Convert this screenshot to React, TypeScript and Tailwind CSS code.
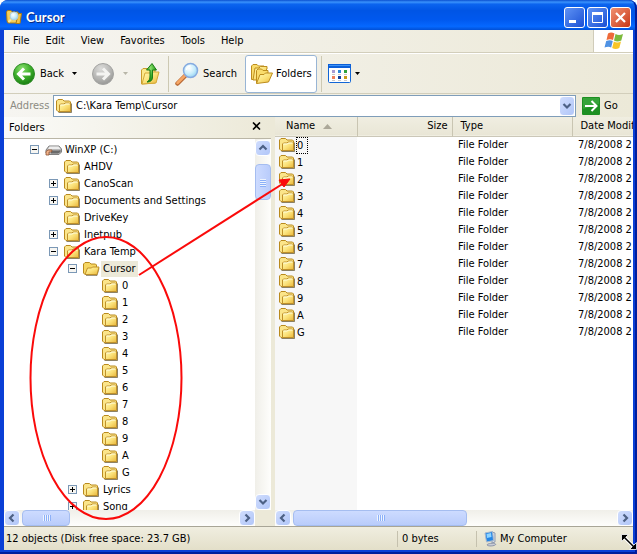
import React from "react";
import clsx from "clsx";

interface TreeNode {
    name: string;
    level: number;
    state?: "open" | "closed";
    selected?: boolean;
    drive?: boolean;
}

const folderNames = ["0", "1", "2", "3", "4", "5", "6", "7", "8", "9", "A", "G"];

const tree: TreeNode[] = [
    { name: "WinXP (C:)", level: 0, state: "open", drive: true },
    { name: "AHDV", level: 1 },
    { name: "CanoScan", level: 1, state: "closed" },
    { name: "Documents and Settings", level: 1, state: "closed" },
    { name: "DriveKey", level: 1 },
    { name: "Inetpub", level: 1, state: "closed" },
    { name: "Kara Temp", level: 1, state: "open" },
    { name: "Cursor", level: 2, state: "open", selected: true },
    ...folderNames.map((name) => ({ name, level: 3 })),
    { name: "Lyrics", level: 2, state: "closed" },
    { name: "Song", level: 2, state: "closed" },
];

const indents = ["pl-[26px]", "pl-[45px]", "pl-16", "pl-[83px]"];

const menus = ["File", "Edit", "View", "Favorites", "Tools", "Help"];

const Gradients = () => (
    <svg width="0" height="0" className="absolute" aria-hidden="true">
        <defs>
            <linearGradient id="folder" x1="0" y1="0" x2="1" y2="1">
                <stop offset="0" stopColor="#fffbb8" />
                <stop offset="0.5" stopColor="#fbe27a" />
                <stop offset="1" stopColor="#e9b63a" />
            </linearGradient>
            <radialGradient id="green" cx="0.4" cy="0.25" r="0.8">
                <stop offset="0" stopColor="#8be070" />
                <stop offset="0.5" stopColor="#3fb02c" />
                <stop offset="1" stopColor="#167a10" />
            </radialGradient>
            <radialGradient id="gray" cx="0.4" cy="0.25" r="0.8">
                <stop offset="0" stopColor="#dcdcda" />
                <stop offset="0.6" stopColor="#b5b5b3" />
                <stop offset="1" stopColor="#949492" />
            </radialGradient>
            <radialGradient id="lens" cx="0.4" cy="0.35" r="0.7">
                <stop offset="0" stopColor="#ffffff" />
                <stop offset="0.6" stopColor="#c5ecfb" />
                <stop offset="1" stopColor="#8fcdf0" />
            </radialGradient>
        </defs>
    </svg>
);

const FolderIcon = () => (
    <svg width="17" height="16" viewBox="0 0 17 16" className="shrink-0" aria-hidden="true">
        <path d="M2.500 14.500h13v-9" fill="none" stroke="#5c4d24" strokeOpacity="0.7" />
        <path d="M0.500 12V3L2 1.500h4.500L8 3h5.500l1 1v9.500H2Z" fill="#fbe58a" stroke="#b98a1e" />
        <path d="M3.500 13.500V7l1-1H8l1-1h4.500l1 1v7.500Z" fill="url(#folder)" stroke="#c0912a" />
        <path d="M4.500 7h4l1-1h4" fill="none" stroke="#fffde0" />
    </svg>
);

const OpenFolderIcon = () => (
    <svg width="17" height="16" viewBox="0 0 17 16" className="shrink-0" aria-hidden="true">
        <path d="M3 14.500h11l2-7" fill="none" stroke="#5c4d24" strokeOpacity="0.6" />
        <path d="M0.500 12V3L2 1.500h4.500L8 3h4.500l1 1v8L12 13.500H2Z" fill="#f6d764" stroke="#b98a1e" />
        <path d="M2 13.500L4.500 7h4l1-1h6.500l-2 7.500Z" fill="url(#folder)" stroke="#c0912a" />
    </svg>
);

const DriveIcon = () => (
    <svg width="17" height="16" viewBox="0 0 17 16" className="shrink-0" aria-hidden="true">
        <path d="M1 8l3-4h10l2.500 3v3L14 12.500H3L1 11Z" fill="#b9b9b9" stroke="#808080" />
        <path d="M4.500 4.500h9l2 2.500H3Z" fill="#ededed" />
        <path d="M6 8.500h8l1.500-.5v2L13 11.500H6Z" fill="#6a6a6a" />
        <path d="M1 13V9.500L3 8h4L6.500 10H4v3Z" fill="#f0b48c" stroke="#8d5030" strokeWidth="0.800" />
    </svg>
);

const TitleIcon = () => (
    <svg width="17" height="16" viewBox="0 0 17 16" className="shrink-0" aria-hidden="true">
        <path d="M1 12L0.500 3l1-1.500H5L6.500 3H12l.5 3-1 8H2Z" fill="#f5cf58" stroke="#a87b18" />
        <path d="M10 14.500L12 4.500h3.500L14 14.500Z" fill="#f3c244" stroke="#a87b18" />
        <circle cx="8" cy="7" r="4" fill="url(#lens)" stroke="#b4d0e0" />
        <path d="M5 10.500L2.500 13" stroke="#fbe9a0" strokeWidth="2" />
    </svg>
);

const FoldersIcon = () => (
    <svg width="24" height="22" viewBox="0 0 24 22" aria-hidden="true">
        <path d="M1.500 16.500V3L3 1.500h4L8.500 3H14v2L5 16.500Z" fill="#f9dc6c" stroke="#bd8d1d" />
        <path d="M3 17L5 5h4l1.500-1.500H17V6L7 17Z" fill="url(#folder)" stroke="#bd8d1d" />
        <path d="M6.500 20V7.500L8 6h3.500L13 7.500h5V10L8 20Z" fill="#f9dc6c" stroke="#bd8d1d" />
        <path d="M6.500 20.500l3.500-9h4L15.500 10h7l-4 9Z" fill="url(#folder)" stroke="#bd8d1d" />
    </svg>
);

const UpIcon = () => (
    <svg width="20" height="24" viewBox="0 0 20 24" aria-hidden="true">
        <path d="M1.500 22V8L3 6.500h5L9 8h6v13Z" fill="#fbe98c" stroke="#c99c2c" />
        <path d="M2 22l3-11h5l1-1h8l-3 11Z" fill="url(#folder)" stroke="#d5a936" />
        <path d="M7 20c4 0 5.500-2 5.500-5V8H16.500L12 1.500 6.500 8H10v6c0 3-1 5-3 6Z" fill="url(#green)" stroke="#1c7d18" />
    </svg>
);

const RoundArrow = ({ back }: { back?: boolean }) => (
    <svg width="24" height="24" viewBox="0 0 24 24" aria-hidden="true">
        <circle cx="12" cy="12" r="10.500" fill={back ? "url(#green)" : "url(#gray)"} stroke={back ? "#2f8c27" : "#a3a3a1"} />
        <path
            d={back ? "M18.500 12H7M12 6.500L6.500 12l5.500 5.500" : "M5.500 12H17M12 6.500l5.500 5.500-5.500 5.500"}
            fill="none"
            stroke={back ? "#ffffff" : "#f4f4f2"}
            strokeWidth="3"
        />
    </svg>
);

const SearchIcon = () => (
    <svg width="24" height="24" viewBox="0 0 24 24" aria-hidden="true">
        <path d="M2.500 21.500l8-8" stroke="#b86a35" strokeWidth="4.500" strokeLinecap="round" />
        <path d="M2.500 21l7.500-7.500" stroke="#f7a765" strokeWidth="2.500" strokeLinecap="round" />
        <circle cx="15.500" cy="8.500" r="7" fill="url(#lens)" stroke="#86abe0" strokeWidth="1.500" />
        <path d="M11.500 8a4 4 0 014-4" fill="none" stroke="#ffffff" strokeWidth="1.500" />
    </svg>
);

const ViewsIcon = () => (
    <svg width="23" height="19" viewBox="0 0 23 19" aria-hidden="true">
        <rect x="0.500" y="0.500" width="22" height="18" rx="1" fill="#ffffff" stroke="#1266d6" />
        <path d="M0 0h23v4H0Z" fill="#0c5fd8" />
        <path d="M1 1h21v1H1Z" fill="#3f93f5" />
        <path d="M4 6h3v3H4Z" fill="#a99bd3" />
        <path d="M10 6h3v3h-3Z" fill="#3087d8" />
        <path d="M16 6h3v3h-3Z" fill="#2fa33d" />
        <path d="M4 12h3v3H4Z" fill="#f0805a" />
        <path d="M10 12h3v3h-3Z" fill="#153f9a" />
        <path d="M16 12h3v3h-3Z" fill="#c79a16" />
        <path d="M4 10.500h3M10 10.500h3M16 10.500h3M4 16.500h3M10 16.500h3M16 16.500h3" stroke="#c9c9c9" />
    </svg>
);

const Caret = ({ muted }: { muted?: boolean }) => (
    <svg width="5" height="3" viewBox="0 0 5 3" aria-hidden="true">
        <path d="M0 0h5L2.500 3Z" fill={muted ? "#b8b6a8" : "#000000"} />
    </svg>
);

const WindowsLogo = () => (
    <svg width="20" height="18" viewBox="0 0 20 18" aria-hidden="true">
        <path d="M4 1.500c2.500-1.500 4.500-1 6.500 0L9 8C7 7 5 7 2.500 8Z" fill="#ee6a3a" />
        <path d="M11.500 2c2.500 1.200 4.500 1.200 7.500 0l-1.700 6.500c-2.800 1.200-5 1.200-7.300 0Z" fill="#7cba3c" />
        <path d="M2.200 9C5 8 6.800 8 8.800 9l-1.600 6.500c-2-1.200-4-1-6.700 0Z" fill="#4f92e4" />
        <path d="M9.800 9.500c2.400 1.200 4.500 1.200 7.200 0L15.300 16c-2.600 1.200-4.800 1.200-7.100 0Z" fill="#f8c526" />
    </svg>
);

const ComputerIcon = () => (
    <svg width="14" height="16" viewBox="0 0 14 16" aria-hidden="true">
        <path d="M8 1l3 1v9l-3 1Z" fill="#d7dbe4" stroke="#8f9bb0" />
        <path d="M1 2l7.500-1.500 1 9-7 1.500Z" fill="#2385e6" stroke="#a9b8cc" />
        <path d="M2.500 3L7 2l.5 4-4.500 1Z" fill="#8fd4ff" />
        <path d="M3 14c0-1.500 7-2.500 8.500-1S5 16 3 14Z" fill="#c9cdd8" stroke="#8c94a8" />
    </svg>
);

const chevrons = {
    up: "M1.500 6.500L5 3l3.500 3.500",
    down: "M1.500 3L5 6.500 8.500 3",
    left: "M6.500 1.500L3 5l3.500 3.500",
    right: "M3.500 1.500L7 5 3.500 8.500",
};

const ScrollButton = ({ direction, label, className = "h-4" }: { direction: keyof typeof chevrons; label: string; className?: string }) => (
    <button
        aria-label={label}
        className={clsx(
            "flex w-4 shrink-0 items-center justify-center rounded-sm border border-white bg-linear-to-br from-[#d0ddfd] to-[#b1c6f8]",
            className
        )}
    >
        <svg width="10" height="10" viewBox="0 0 10 10" aria-hidden="true">
            <path d={chevrons[direction]} fill="none" stroke="#4d6185" strokeWidth="2.200" />
        </svg>
    </button>
);

const HorizontalScroll = ({ thumb }: { thumb: string }) => (
    <div className="flex h-4 shrink-0 bg-linear-to-b from-[#f0efe9] to-[#fefefc]">
        <ScrollButton direction="left" label="Scroll left" />
        <div className="flex grow pl-0.5">
            <div
                className={clsx(
                    "flex items-center justify-center gap-px rounded-sm border border-[#a5bdf0] bg-linear-to-b from-[#cddbff] to-[#b9ccfb]",
                    thumb
                )}
            >
                {[0, 1, 2, 3].map((line) => (
                    <span key={line} className="h-1.5 w-px bg-[#eef4fe] shadow-[1px_0_#8cb0f8]" />
                ))}
            </div>
        </div>
        <ScrollButton direction="right" label="Scroll right" />
    </div>
);

const Expander = ({ state }: { state?: "open" | "closed" }) => {
    if (!state) return <span className="w-[9px] shrink-0" />;
    return (
        <button aria-label={state === "open" ? "Collapse" : "Expand"} className="shrink-0">
            <svg width="9" height="9" viewBox="0 0 9 9" aria-hidden="true" shapeRendering="crispEdges">
                <rect x="0.500" y="0.500" width="8" height="8" fill="#f7f6f2" stroke="#7b98b6" />
                <path d={state === "open" ? "M2 4.500h5" : "M2 4.500h5M4.500 2v5"} stroke="#000000" />
            </svg>
        </button>
    );
};

const TitleBar = () => (
    <header className="flex h-[30px] shrink-0 items-center bg-[linear-gradient(#0a50d0_0%,#3a92fc_7%,#0b64ef_14%,#0055e5_35%,#0058ee_65%,#0568ff_88%,#0150d6_100%)] px-1.5 pt-1">
        <TitleIcon />
        <h1 className="grow pl-[3px] font-['Lato',sans-serif] text-[13px] font-bold text-white [text-shadow:1px_1px_#0a2a80]">Cursor</h1>
        <div className="flex gap-0.5">
            <button aria-label="Minimize" className="size-[21px] rounded-[3px] border border-white bg-linear-to-br from-[#5f92f4] to-[#1c4fd4]">
                <svg width="19" height="19" viewBox="0 0 19 19" aria-hidden="true">
                    <path d="M4 12h7v3H4Z" fill="#ffffff" />
                </svg>
            </button>
            <button aria-label="Maximize" className="size-[21px] rounded-[3px] border border-white bg-linear-to-br from-[#5f92f4] to-[#1c4fd4]">
                <svg width="19" height="19" viewBox="0 0 19 19" aria-hidden="true">
                    <path d="M4.500 5v9.500h10V5" fill="none" stroke="#ffffff" />
                    <path d="M4 4h11v3H4Z" fill="#ffffff" />
                </svg>
            </button>
            <button aria-label="Close" className="size-[21px] rounded-[3px] border border-white bg-linear-to-br from-[#f0906f] to-[#c8330f]">
                <svg width="19" height="19" viewBox="0 0 19 19" aria-hidden="true">
                    <path d="M5 5l9 9M14 5l-9 9" stroke="#ffffff" strokeWidth="2.200" />
                </svg>
            </button>
        </div>
    </header>
);

const MenuBar = () => (
    <nav className="flex h-[23px] shrink-0 border-b border-[#d2cebb]">
        <div className="flex grow items-center gap-4 pl-[9px]">
            {menus.map((menu) => (
                <button key={menu}>{menu}</button>
            ))}
        </div>
        <div className="flex w-10 items-center justify-center border-l border-[#d0ccba] bg-white">
            <WindowsLogo />
        </div>
    </nav>
);

const Toolbar = () => (
    <div className="flex h-10 shrink-0 items-center border-t border-white pl-2">
        <button className="flex items-center gap-1">
            <RoundArrow back />
            Back
        </button>
        <button aria-label="Back history" className="px-2">
            <Caret />
        </button>
        <button aria-label="Forward" className="pl-1.5">
            <RoundArrow />
        </button>
        <button aria-label="Forward history" className="px-2">
            <Caret muted />
        </button>
        <button aria-label="Up" className="px-1">
            <UpIcon />
        </button>
        <span className="mx-1 h-9 w-px bg-[#cdc9b3]" />
        <button className="flex items-center gap-1 pl-0.5">
            <SearchIcon />
            Search
        </button>
        <button className="ml-2 flex h-[38px] items-center gap-0.5 rounded-[3px] border border-[#98b5d5] bg-white px-1">
            <FoldersIcon />
            Folders
        </button>
        <span className="mx-1 h-9 w-px bg-[#cdc9b3]" />
        <button aria-label="Views" className="flex items-center gap-1 pl-0.5">
            <ViewsIcon />
            <Caret />
        </button>
    </div>
);

const AddressBar = () => (
    <div className="flex h-6 shrink-0 items-center border-t border-[#d2cebb] pl-1.5">
        <label htmlFor="address" className="w-[43px] text-[#8c8b82]">
            Address
        </label>
        <div className="flex h-[22px] grow items-center border border-[#7f9db9] bg-white pl-0.5">
            <FolderIcon />
            <input id="address" defaultValue="C:\Kara Temp\Cursor" className="min-w-0 grow pl-[3px] outline-none" />
            <ScrollButton direction="down" label="Show addresses" className="h-5" />
        </div>
        <button className="flex w-[57px] items-center gap-1 pl-1.5">
            <svg width="18" height="18" viewBox="0 0 18 18" aria-hidden="true">
                <rect width="18" height="18" rx="1" fill="#1d8f22" />
                <path d="M1 1h16v6L1 12Z" fill="#46b14a" fillOpacity="0.6" />
                <path d="M3 9h11M9.500 4l5 5-5 5" fill="none" stroke="#ffffff" strokeWidth="2" />
            </svg>
            Go
        </button>
    </div>
);

const FolderTree = () => (
    <aside className="flex w-[267px] shrink-0 flex-col">
        <div className="flex h-[22px] shrink-0 items-center justify-between border-b border-[#bab6a6] bg-linear-to-r from-[#fbfbf9] to-[#ece9d8] pr-2.5 pl-[5px]">
            <h2>Folders</h2>
            <button aria-label="Close folders" className="pb-1">
                <svg width="9" height="8" viewBox="0 0 9 8" aria-hidden="true">
                    <path d="M1 0.500l7 7M8 0.500l-7 7" stroke="#000000" strokeWidth="1.600" />
                </svg>
            </button>
        </div>
        <div className="flex min-h-0 grow">
            <ul className="grow overflow-hidden bg-white pt-0.5">
                {tree.map((node) => (
                    <li key={node.name} className={clsx("flex h-[17px] items-center", indents[node.level])}>
                        <Expander state={node.state} />
                        <span className="pr-px pl-1.5">{node.drive ? <DriveIcon /> : node.selected ? <OpenFolderIcon /> : <FolderIcon />}</span>
                        <span className={clsx("px-0.5 leading-4", node.selected && "bg-[#ece9d8]")}>{node.name}</span>
                    </li>
                ))}
            </ul>
            <div className="flex w-4 shrink-0 flex-col bg-linear-to-r from-[#f0efe9] to-[#fefefc] pt-px">
                <ScrollButton direction="up" label="Scroll up" />
                <div className="flex grow flex-col pt-2">
                    <div className="flex h-9 flex-col items-center justify-center gap-px rounded-sm border border-[#a5bdf0] bg-linear-to-r from-[#cddbff] to-[#b9ccfb]">
                        {[0, 1, 2, 3].map((line) => (
                            <span key={line} className="h-px w-1.5 bg-[#eef4fe] shadow-[0_1px_#8cb0f8]" />
                        ))}
                    </div>
                </div>
                <ScrollButton direction="down" label="Scroll down" />
            </div>
        </div>
        <div className="pr-4">
            <HorizontalScroll thumb="w-12" />
        </div>
    </aside>
);

const FileList = () => (
    <main className="flex min-w-0 grow flex-col bg-[linear-gradient(to_right,#f7f7f7_82px,#ffffff_82px)]">
        <div className="min-h-0 grow overflow-hidden">
            <table className="w-[420px] table-fixed border-collapse text-left whitespace-nowrap">
                <thead>
                    <tr className="h-[19px] border-b border-[#cbc7b8] bg-linear-to-b from-[#f0eee1] to-[#e9e6d6]">
                        <th className="w-[82px] border-r border-[#c9c5b2] p-0 pl-[11px] font-normal">
                            <span className="flex items-center gap-2">
                                Name
                                <svg width="9" height="5" viewBox="0 0 9 5" aria-hidden="true">
                                    <path d="M0 5h9L4.500 0Z" fill="#aca899" />
                                </svg>
                            </span>
                        </th>
                        <th className="w-[95px] border-r border-[#c9c5b2] p-0 pr-1 text-right font-normal">Size</th>
                        <th className="w-[120px] border-r border-[#c9c5b2] p-0 pl-2 font-normal">Type</th>
                        <th className="p-0 pl-2 font-normal">Date Modified</th>
                    </tr>
                </thead>
                <tbody>
                    {folderNames.map((name, index) => (
                        <tr key={name} className="h-[17px]">
                            <td className="p-0 pl-1">
                                <span className="flex items-center">
                                    <FolderIcon />
                                    <span
                                        className={clsx(
                                            "border border-dotted pr-1 leading-[15px]",
                                            index === 0 ? "border-black" : "border-transparent"
                                        )}
                                    >
                                        {name}
                                    </span>
                                </span>
                            </td>
                            <td className="p-0" />
                            <td className="p-0 pl-1.5">File Folder</td>
                            <td className="p-0 pl-1.5">7/8/2008 2</td>
                        </tr>
                    ))}
                </tbody>
            </table>
        </div>
        <HorizontalScroll thumb="w-[174px]" />
    </main>
);

const StatusBar = () => (
    <footer className="flex h-6 shrink-0 items-center border-t border-[#a8a596] bg-linear-to-b from-[#f0eee0] to-[#e3dfc9]">
        <span className="grow pl-0.5">12 objects (Disk free space: 23.7 GB)</span>
        <span className="w-[79px] border-l border-[#c5c1ae] pl-1">0 bytes</span>
        <span className="flex w-[157px] items-center gap-0.5 border-l border-[#c5c1ae] pl-[7px]">
            <ComputerIcon />
            My Computer
        </span>
    </footer>
);

const Annotations = () => (
    <svg width="637" height="554" viewBox="0 0 637 554" className="pointer-events-none absolute top-0 left-0" aria-hidden="true">
        <ellipse cx="106" cy="378" rx="75.500" ry="141" fill="none" stroke="#fa0a0a" strokeWidth="2" />
        <path d="M139 275L284 183" stroke="#fa0a0a" strokeWidth="2" />
        <path d="M290 179l-6 8-5-7Z" fill="#fa0a0a" stroke="#fa0a0a" />
    </svg>
);

const ResizeCursor = () => (
    <svg width="16" height="16" viewBox="0 0 16 16" className="absolute right-0 bottom-1" aria-hidden="true">
        <path d="M3 3l10 10" stroke="#ffffff" strokeWidth="3.500" />
        <path d="M0.500 0.500h7L0.500 7.500ZM15.500 15.500h-7l7-7Z" fill="#000000" stroke="#ffffff" strokeWidth="0.800" />
        <path d="M3 3l10 10" stroke="#000000" strokeWidth="1.500" />
    </svg>
);

export default function App() {
    return (
        <div className="relative flex h-screen flex-col overflow-hidden rounded-t-lg bg-[#0842d8] font-['DejaVu_Sans_Condensed','DejaVu_Sans',sans-serif] text-[11px] leading-4 text-black">
            <Gradients />
            <TitleBar />
            <div className="flex min-h-0 grow flex-col border-x-4 border-b-4 border-[#0a3fd6] bg-linear-to-r from-[#f6f5f1] to-[#ece9d8]">
                <MenuBar />
                <Toolbar />
                <AddressBar />
                <div className="flex min-h-0 grow gap-1 bg-[#ece9d8]">
                    <FolderTree />
                    <FileList />
                </div>
                <StatusBar />
            </div>
            <div className="pointer-events-none absolute inset-0 rounded-t-lg border-r-2 border-b-2 border-[#001e9c]" />
            <Annotations />
            <ResizeCursor />
        </div>
    );
}
